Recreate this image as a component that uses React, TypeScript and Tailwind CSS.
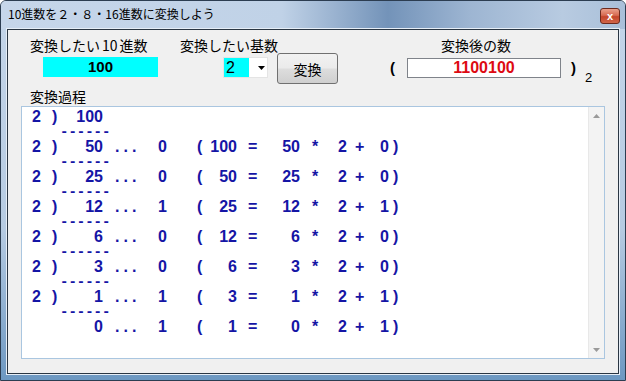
import React from 'react';

const rows = [
  { q: '50', n: '100', r: '0' },
  { q: '25', n: '50', r: '0' },
  { q: '12', n: '25', r: '1' },
  { q: '6', n: '12', r: '0' },
  { q: '3', n: '6', r: '0' },
  { q: '1', n: '3', r: '1' },
  { q: '0', n: '1', r: '1' },
];

const Dashes: React.FC = () => (
  <div className="flex h-[15px] pt-[1px] leading-[14px] font-['Liberation_Mono',monospace] text-[14px] font-bold">
    <span className="ml-[28px]">------</span>
  </div>
);

const Step: React.FC<{ d: string; q: string; n: string; r: string }> = ({ d, q, n, r }) => (
  <div className="flex h-[15px] leading-[15px] whitespace-pre">
    <span className="w-[20px]">{d}</span>
    <span className="w-[10px]">{d ? ')' : ''}</span>
    <span className="w-[41px] text-right">{q}</span>
    <span className="w-[55px] pl-[12px] tracking-[4px]">...</span>
    <span className="w-[39px]">{r}</span>
    <span className="w-[10px]">(</span>
    <span className="w-[30px] text-right">{n}</span>
    <span className="w-[23px] pl-[11px]">=</span>
    <span className="w-[40px] text-right">{q}</span>
    <span className="w-[38px] pl-[12px]">*</span>
    <span className="w-[17px]">2</span>
    <span className="w-[13px]">+</span>
    <span className="w-[21px] text-right">{r}</span>
    <span className="pl-[4px]">)</span>
  </div>
);

const Arrow: React.FC<{ up?: boolean }> = ({ up }) => (
  <svg width="7" height="4" viewBox="0 0 7 4" className="text-[#9a9a9a]">
    <path d={up ? 'M0 4 L3.5 0 L7 4 Z' : 'M0 0 L3.5 4 L7 0 Z'} fill="currentColor" />
  </svg>
);

export default function App() {
  return (
    <div className="w-[626px] h-[381px] flex flex-col border border-[#2c3d51] rounded-t-[6px] overflow-hidden bg-[linear-gradient(180deg,#c4d5e9_0%,#b6cbe2_60%,#6d98c2_100%)] font-['Noto_Sans_CJK_JP',sans-serif] text-black">
      {/* title bar */}
      <div className="h-[28px] flex items-start justify-between bg-[linear-gradient(90deg,#c6d6ea_0%,#c0d2e7_45%,#93adcc_55%,#7393b9_62%,#9db5d2_75%,#b8cbe1_90%,#a9bfd9_100%)]">
        <span className="ml-[7px] mt-[5px] text-[12px] leading-[16px]">10進数を２・８・16進数に変換しよう</span>
        <div className="mt-[7px] mr-[5px] w-[20px] h-[16px] rounded-[3px] border border-[#6d2a1e] bg-[linear-gradient(180deg,#eaa08c_0%,#d76b52_45%,#c4442a_55%,#d0664a_100%)] flex items-center justify-center">
          <span className="text-white text-[11px] font-bold leading-none font-['Liberation_Sans',sans-serif]">x</span>
        </div>
      </div>

      {/* client area */}
      <div className="flex-1 mx-[6px] mb-[6px] bg-[#f0f0f0] border border-[#2a3643] shadow-[0_0_0_1px_#e6eef7] flex flex-col">
        <div className="flex h-[56px]">
          {/* decimal input */}
          <div className="ml-[22px] w-[128px] flex flex-col">
            <span className="mt-[5px] h-[20px] leading-[20px] text-[14px] whitespace-nowrap">
              変換したい<span className="px-[2px]">10</span>進数
            </span>
            <div className="ml-[13px] mt-[2px] w-[115px] h-[20px] bg-[#00ffff] flex items-center justify-center font-['Liberation_Sans',sans-serif] font-bold text-[15px]">
              100
            </div>
          </div>

          {/* base select + button */}
          <div className="ml-[22px] flex flex-col">
            <span className="mt-[5px] h-[20px] leading-[20px] text-[14px]">変換したい基数</span>
            <div className="flex items-start -mt-[2px]">
              <div className="ml-[43px] mt-[4px] w-[45px] h-[21px] bg-white border border-[#e4e4e4] flex items-center">
                <div className="w-[25px] h-[19px] bg-[#00ffff] pl-[2px] leading-[19px] font-['Liberation_Sans',sans-serif] text-[16px]">2</div>
                <svg width="7" height="4" viewBox="0 0 7 4" className="ml-[9px]">
                  <path d="M0 0 L3.5 4 L7 0 Z" fill="#000" />
                </svg>
              </div>
              <button className="ml-[9px] w-[61px] h-[31px] rounded-[3px] border border-[#707070] bg-[linear-gradient(180deg,#f2f2f2_0%,#ebebeb_48%,#dddddd_52%,#cfcfcf_100%)] text-[14px] leading-none">
                変換
              </button>
            </div>
          </div>

          {/* result */}
          <div className="ml-[52px] flex flex-col">
            <span className="ml-[51px] mt-[5px] h-[20px] leading-[20px] text-[14px]">変換後の数</span>
            <div className="flex items-start mt-[3px]">
              <span className="w-[17px] h-[20px] leading-[20px] font-['Liberation_Sans',sans-serif] font-bold text-[15px]">(</span>
              <div className="w-[154px] h-[20px] bg-white border border-[#7f838a] flex items-center justify-center font-['Liberation_Sans',sans-serif] font-bold text-[16px] text-[#dd0a12]">
                1100100
              </div>
              <span className="ml-[10px] h-[20px] leading-[20px] font-['Liberation_Sans',sans-serif] font-bold text-[15px]">)</span>
              <span className="ml-[9px] mt-[13px] h-[14px] leading-[14px] font-['Liberation_Sans',sans-serif] text-[13px]">2</span>
            </div>
          </div>
        </div>

        <span className="ml-[22px] h-[20px] leading-[20px] text-[14px]">変換過程</span>

        {/* process text box */}
        <div className="ml-[13px] w-[584px] h-[253px] bg-white border border-[#aac6e0] flex">
          <div className="flex-1 pl-[10px] pt-[2px] text-[#1515a5] font-['Liberation_Sans',sans-serif] font-bold text-[16px]">
            <div className="flex h-[15px] leading-[15px] whitespace-pre">
              <span className="w-[20px]">2</span>
              <span className="w-[10px]">)</span>
              <span className="w-[41px] text-right">100</span>
            </div>
            {rows.map((row, i) => (
              <React.Fragment key={i}>
                <Dashes />
                <Step d={i < rows.length - 1 ? '2' : ''} q={row.q} n={row.n} r={row.r} />
              </React.Fragment>
            ))}
          </div>
          <div className="w-[16px] bg-[#f3f3f3] border-l border-[#e8e8e8] flex flex-col justify-between">
            <div className="h-[17px] flex items-center justify-center">
              <Arrow up />
            </div>
            <div className="h-[17px] flex items-center justify-center">
              <Arrow />
            </div>
          </div>
        </div>
      </div>
    </div>
  );
}
